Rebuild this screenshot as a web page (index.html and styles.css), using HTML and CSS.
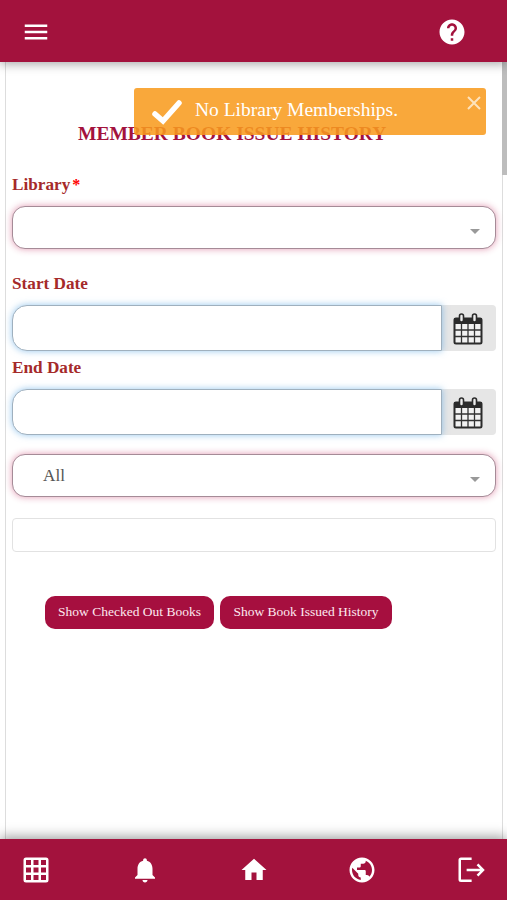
FILE: index.html
```html
<!DOCTYPE html>
<html lang="en">
<head>
    <meta charset="UTF-8">
    <meta name="viewport" content="width=device-width, initial-scale=1.0">
    <title>Member Book Issue History</title>
    <link rel="stylesheet" href="styles.css">
</head>
<body>

    <!-- Header -->
    <header class="top-bar">
        <svg class="icon" viewBox="0 0 24 24"><path d="M3 18h18v-2H3v2zm0-5h18v-2H3v2zm0-7v2h18V6H3z"/></svg>
        <svg class="icon" viewBox="0 0 24 24"><path d="M12 2C6.48 2 2 6.48 2 12s4.480 10 10 10 10-4.480 10-10S17.520 2 12 2zm1 17h-2v-2h2v2zm2.070-7.750l-.9.920C13.450 12.900 13 13.500 13 15h-2v-.5c0-1.100.450-2.100 1.170-2.830l1.240-1.260c.370-.360.590-.860.590-1.410 0-1.100-.9-2-2-2s-2 .9-2 2H8c0-2.210 1.790-4 4-4s4 1.790 4 4c0 .880-.360 1.680-.930 2.250z"/></svg>
    </header>

    <!-- Toast message -->
    <div class="toast">
        <svg class="toast-check" viewBox="0 0 32 26"><path d="M4 15l8 7L28 4"/></svg>
        <span class="toast-text">No Library Memberships.</span>
        <svg class="toast-close" viewBox="0 0 14 14"><path d="M1 1l12 12M13 1L1 13"/></svg>
    </div>

    <!-- Main Content -->
    <main class="content">
        <div class="page">
            <h1 class="title">MEMBER BOOK ISSUE HISTORY</h1>

            <label class="label">Library<span class="required">*</span></label>
            <div class="select select-library">
                <span class="caret"></span>
            </div>

            <label class="label">Start Date</label>
            <div class="date-group">
                <input class="date-input" type="text">
                <span class="date-addon">
                    <svg class="calendar" viewBox="0 0 30 34">
                        <rect class="cal-body" x="1.500" y="6.500" width="27" height="25" rx="1.500"/>
                        <path class="cal-head" d="M1 6h28v6H1z"/>
                        <path class="cal-grid" d="M8.500 12v19M15 12v19M21.500 12v19M2 18h26M2 24.500h26"/>
                        <rect class="cal-ring" x="6.500" y="2" width="4" height="8" rx="2"/>
                        <rect class="cal-ring" x="19.500" y="2" width="4" height="8" rx="2"/>
                    </svg>
                </span>
            </div>

            <label class="label">End Date</label>
            <div class="date-group">
                <input class="date-input" type="text">
                <span class="date-addon">
                    <svg class="calendar" viewBox="0 0 30 34">
                        <rect class="cal-body" x="1.500" y="6.500" width="27" height="25" rx="1.500"/>
                        <path class="cal-head" d="M1 6h28v6H1z"/>
                        <path class="cal-grid" d="M8.500 12v19M15 12v19M21.500 12v19M2 18h26M2 24.500h26"/>
                        <rect class="cal-ring" x="6.500" y="2" width="4" height="8" rx="2"/>
                        <rect class="cal-ring" x="19.500" y="2" width="4" height="8" rx="2"/>
                    </svg>
                </span>
            </div>

            <div class="select select-type">
                <span>All</span>
                <span class="caret"></span>
            </div>

            <input class="search" type="text">

            <div class="buttons">
                <button class="btn btn-books">Show Checked Out Books</button>
                <button class="btn btn-history">Show Book Issued History</button>
            </div>
        </div>
        <div class="scrollbar"></div>
    </main>

    <!-- Bottom navigation -->
    <nav class="bottom-bar">
        <svg class="icon" viewBox="0 0 24 24"><path fill-rule="evenodd" d="M4 2h16a2 2 0 0 1 2 2v16a2 2 0 0 1-2 2H4a2 2 0 0 1-2-2V4a2 2 0 0 1 2-2zM4 4v4h4V4zM10 4v4h4V4zM16 4v4h4V4zM4 10v4h4v-4zM10 10v4h4v-4zM16 10v4h4v-4zM4 16v4h4v-4zM10 16v4h4v-4zM16 16v4h4v-4z"/></svg>
        <svg class="icon" viewBox="0 0 24 24"><path d="M12 22c1.100 0 2-.9 2-2h-4c0 1.100.890 2 2 2zm6-6v-5c0-3.070-1.640-5.640-4.500-6.320V4c0-.830-.670-1.500-1.500-1.500s-1.500.670-1.500 1.500v.680C7.630 5.360 6 7.920 6 11v5l-2 2v1h16v-1l-2-2z"/></svg>
        <svg class="icon" viewBox="0 0 24 24"><path d="M10 20v-6h4v6h5v-8h3L12 3 2 12h3v8z"/></svg>
        <svg class="icon" viewBox="0 0 24 24"><path d="M12 2C6.480 2 2 6.480 2 12s4.480 10 10 10 10-4.480 10-10S17.520 2 12 2zm-1 17.930c-3.950-.490-7-3.850-7-7.930 0-.620.080-1.210.210-1.790L9 15v1c0 1.100.9 2 2 2v1.930zm6.900-2.540c-.260-.810-1-1.390-1.900-1.390h-1v-3c0-.550-.450-1-1-1H8v-2h2c.550 0 1-.450 1-1V7h2c1.100 0 2-.9 2-2v-.410c2.930 1.190 5 4.060 5 7.410 0 2.080-.8 3.970-2.100 5.390z"/></svg>
        <svg class="icon" viewBox="0 0 24 24"><path class="logout" d="M12.500 3H4a1 1 0 0 0-1 1v15.500a1 1 0 0 0 1 1h8.500M8.500 12H21.500M17.200 7.500l4.400 4.500-4.400 4.500"/></svg>
    </nav>

</body>
</html>
```
FILE: styles.css
```css
* {
    box-sizing: border-box;
}

html, body {
    margin: 0;
    padding: 0;
    height: 100vh;
    overflow: hidden;
}

body {
    display: flex;
    flex-direction: column;
    background-color: #fff;
    font-family: "Liberation Serif", "Times New Roman", serif;
}

/* Top and bottom bars */
.top-bar,
.bottom-bar {
    display: flex;
    justify-content: space-between;
    align-items: center;
    flex: none;
    background-color: #a3123d;
    z-index: 1;
}

.top-bar {
    height: 62px;
    padding: 1px 40px 0 21px;
    box-shadow: 0 2px 10px rgba(0, 0, 0, 0.35);
}

.bottom-bar {
    height: 61px;
    padding: 0 21px;
    box-shadow: 0 -2px 12px rgba(0, 0, 0, 0.4);
}

.icon {
    width: 30px;
    height: 30px;
    fill: #fff;
}

.icon .logout {
    fill: none;
    stroke: #fff;
    stroke-width: 2;
}

/* Toast */
.toast {
    position: absolute;
    top: 88px;
    right: 21px;
    width: 352px;
    height: 47px;
    display: flex;
    align-items: center;
    padding: 0 5px 3px 17px;
    border-radius: 3px;
    background-color: rgba(248, 155, 30, 0.87);
    color: #fff;
    z-index: 2;
}

.toast-check {
    width: 32px;
    height: 26px;
    margin-top: 4px;
    fill: none;
    stroke: #fff;
    stroke-width: 5.5;
    stroke-linecap: round;
}

.toast-text {
    flex: 1;
    margin-left: 12px;
    font-size: 19.5px;
    white-space: nowrap;
}

.toast-close {
    align-self: flex-start;
    width: 14px;
    height: 14px;
    margin-top: 8px;
    fill: none;
    stroke: #fde3bc;
    stroke-width: 2;
}

/* Page */
.content {
    flex: 1;
    display: flex;
    padding-left: 5px;
}

.page {
    flex: 1;
    padding: 60px 6px 0;
    border-left: 1px solid #ddd;
    border-right: 1px solid #ddd;
}

.scrollbar {
    width: 5px;
    height: 113px;
    margin-left: -1px;
    background-color: #bdbdbd;
}

.title {
    margin: 0 0 29px 66px;
    font-size: 19.5px;
    line-height: 24px;
    color: #a3123d;
    white-space: nowrap;
}

.label {
    display: block;
    height: 20px;
    font-size: 17.2px;
    line-height: 20px;
    font-weight: bold;
    color: #a52a2a;
}

.required {
    margin-left: 2px;
    color: #f00;
    font-size: 16px;
}

.select {
    display: flex;
    align-items: center;
    justify-content: space-between;
    height: 43px;
    padding: 0 15px 0 30px;
    border: 1px solid #a58b97;
    border-radius: 13px;
    background-color: #fff;
    box-shadow: 0 0 7px rgba(190, 30, 85, 0.45);
    color: #555;
    font-size: 17.2px;
}

.select-library {
    margin: 11px 0 25px;
}

.caret {
    margin: 7px 0 0 auto;
    border: 5px solid transparent;
    border-top-color: #999;
    border-bottom: 0;
}

/* Date fields */
.date-group {
    display: flex;
    height: 46px;
    margin: 11px 0 7px;
}

.date-input {
    flex: 1;
    min-width: 0;
    border: 1px solid #9fb0be;
    border-radius: 15px 0 0 15px;
    background-color: #fff;
    box-shadow: 0 0 7px rgba(80, 160, 225, 0.6);
    z-index: 1;
}

.date-addon {
    display: flex;
    align-items: center;
    justify-content: center;
    width: 54px;
    padding: 1px 2px 0 0;
    border-radius: 0 4px 4px 0;
    background-color: #e6e6e6;
}

.calendar {
    width: 30px;
    height: 34px;
}

.cal-body {
    fill: #f2f2f2;
    stroke: #2b2b2b;
    stroke-width: 2;
}

.cal-head {
    fill: #2b2b2b;
}

.cal-grid {
    fill: none;
    stroke: #333;
    stroke-width: 1.3;
}

.cal-ring {
    fill: #eee;
    stroke: #2b2b2b;
    stroke-width: 1.6;
}

.select-type {
    margin-top: 19px;
}

.search {
    display: block;
    width: 100%;
    height: 34px;
    margin-top: 21px;
    border: 1px solid #e2e2e2;
    border-radius: 4px;
    background-color: #fff;
}

/* Buttons */
.buttons {
    display: flex;
    gap: 6px;
    margin: 44px 0 0 33px;
}

.btn {
    height: 33px;
    padding: 0 0 2px;
    border: 0;
    border-radius: 10px;
    background-color: #a60f3f;
    color: #fde9ef;
    font-family: inherit;
    font-size: 13.5px;
    white-space: nowrap;
}

.btn-books {
    width: 169px;
}

.btn-history {
    width: 172px;
}
```
